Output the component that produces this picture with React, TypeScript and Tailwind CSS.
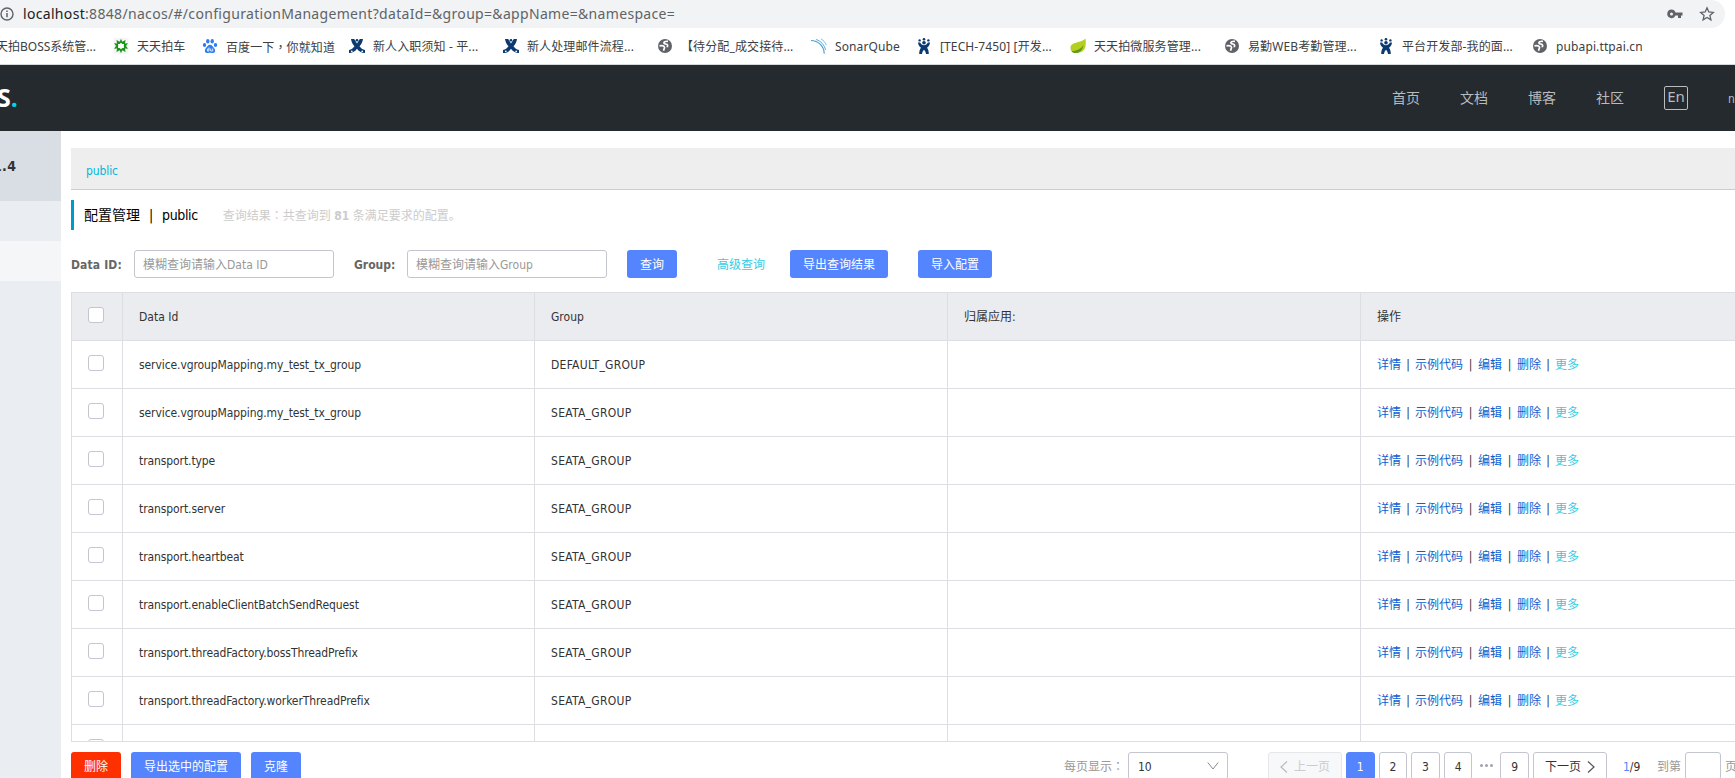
import type { ReactNode } from "react";

const globe = (
	<svg viewBox="0 0 16 16" className="w-4 h-4">
		<circle cx="8" cy="8" r="7" fill="#5f6368" />
		<path
			d="M2.500 7.800c2.200-.3 4.500-.2 5 1.200.5 1.300-1 1.500-.8 3.800M11 3.300C8 3 6.500 3.900 7 5.200c.7 1.200 3 .4 3.500 1.800.3.900-.2 1.600-.2 2.300"
			stroke="#fff"
			strokeWidth="1.700"
			fill="none"
		/>
	</svg>
);

const jira = (
	<svg viewBox="0 0 16 16" className="w-4 h-4" fill="#0b3a70">
		<circle cx="3.600" cy="2.400" r="1.200" />
		<circle cx="8" cy="1.300" r="1.300" />
		<circle cx="12.400" cy="2.400" r="1.200" />
		<circle cx="8" cy="4.800" r="1.800" />
		<path d="M2 4.500h2.200C5 6.300 6.300 7.300 8 7.300s3-1 3.800-2.800H14c-.2 2.400-1.300 4-3 5.300 1.300 1.700 1.800 3.800 1.800 6.200H10c-.1-1.500-.8-3-2-4.300-1.200 1.300-1.900 2.800-2 4.300H3.200c0-2.400.5-4.500 1.800-6.200-1.700-1.300-2.800-2.900-3-5.300z" />
	</svg>
);

const confluence = (
	<svg viewBox="0 0 16 16" className="w-4 h-4" fill="#0b3a70">
		<circle cx="8" cy="2.300" r="1.300" />
		<path d="M2 1h3.200L8 5.500 10.800 1H14c-.4 3-1.600 5.300-3.500 7.300 1.400 2 3 3.100 5.500 3.700v3c-3.700 0-6.300-1.500-8-4.200C6.300 13.500 3.700 15 0 15v-3c2.500-.6 4.100-1.700 5.500-3.700C3.600 6.300 2.400 4 2 1z" />
		<circle cx="2.800" cy="13.300" r=".9" fill="#fff" />
		<circle cx="13.200" cy="13.300" r=".9" fill="#fff" />
	</svg>
);

const burst = (
	<svg viewBox="0 0 16 16" className="w-4 h-4">
		<rect x=".5" y="0" width="15" height="16" fill="#f5f5f5" />
		<path
			d="M8 .8l1.300 3L12.500 2l-.5 3.400 3-.2L13 8l2 2.700-3-.2.5 3.500-3.200-1.800L8 15.200l-1.300-3L3.500 14l.5-3.500-3 .2L3 8 1 5.200l3 .2L3.500 2l3.200 1.800z"
			fill="#1c941c"
		/>
		<path d="M8 4.800l1.300 1.300L11 6l-.2 2 .2 2-1.700-.1L8 11.200 6.700 9.900 5 10l.2-2L5 6l1.700.1z" fill="#fff" />
	</svg>
);

const paw = (
	<svg viewBox="0 0 16 16" className="w-4 h-4" fill="#2d7ff0">
		<ellipse cx="2.500" cy="7" rx="1.700" ry="2.100" />
		<ellipse cx="5.800" cy="3.200" rx="1.700" ry="2.300" />
		<ellipse cx="10.200" cy="3.200" rx="1.700" ry="2.300" />
		<ellipse cx="13.500" cy="7" rx="1.700" ry="2.100" />
		<path d="M8 6.800c2 0 2.500 1.800 4 3.200 1.700 1.500 1.700 5-1 5-1.200 0-1.800-.3-3-.3s-1.800.3-3 .3c-2.700 0-2.700-3.500-1-5 1.500-1.400 2-3.200 4-3.200z" />
		<path
			d="M7 9.500V13H5.500v-2H7M8.700 10.500V13h2v-2.500"
			stroke="#fff"
			strokeWidth=".8"
			fill="none"
		/>
	</svg>
);

const sonar = (
	<svg viewBox="0 0 16 16" className="w-4 h-4" fill="none" stroke="#4b9fd5">
		<path d="M0 2.500C7 2.500 13 8 13.200 15.500" strokeWidth="1.200" />
		<path d="M5 1.500c5 1.500 8.500 5.500 9.500 10.500" strokeWidth=".9" />
		<path d="M10 1c2.500 1.300 4.200 3.400 5.300 6" strokeWidth=".7" />
	</svg>
);

const leaf = (
	<svg viewBox="0 0 16 16" className="w-4 h-4">
		<path
			d="M15.500.5c.8 7 .3 14-8.500 14.300C3 15 .5 13.500.5 10 .5 3.500 11.500 5 15.500.5z"
			fill="#b5cf1f"
		/>
		<path
			d="M1.500 13c5 .3 9.500-2.200 12-6-1 5.500-4 8.300-8.500 8-1.700-.1-3-.8-3.500-2z"
			fill="#5f9a1c"
		/>
	</svg>
);

type Bookmark = { icon: ReactNode; label: ReactNode; width: string };

// Full-width punctuation centred in its cell
function Punct({ children }: { children: ReactNode }) {
	return <span className="font-['Noto_Sans_CJK_TC',sans-serif]">{children}</span>;
}

const bookmarks: Bookmark[] = [
	{ icon: burst, label: "天天拍车", width: "w-[89px]" },
	{ icon: paw, label: <>百度一下<Punct>，</Punct>你就知道</>, width: "w-[147px]" },
	{ icon: confluence, label: "新人入职须知 - 平...", width: "w-[154px]" },
	{ icon: confluence, label: "新人处理邮件流程...", width: "w-[154px]" },
	{ icon: globe, label: "【待分配_成交接待...", width: "w-[154px]" },
	{ icon: sonar, label: "SonarQube", width: "w-[105px]" },
	{ icon: jira, label: "[TECH-7450] [开发...", width: "w-[154px]" },
	{ icon: leaf, label: "天天拍微服务管理...", width: "w-[154px]" },
	{ icon: globe, label: "易勤WEB考勤管理...", width: "w-[154px]" },
	{ icon: jira, label: "平台开发部-我的面...", width: "w-[154px]" },
	{ icon: globe, label: "pubapi.ttpai.cn", width: "w-[154px]" },
];

const rows = [
	["service.vgroupMapping.my_test_tx_group", "DEFAULT_GROUP"],
	["service.vgroupMapping.my_test_tx_group", "SEATA_GROUP"],
	["transport.type", "SEATA_GROUP"],
	["transport.server", "SEATA_GROUP"],
	["transport.heartbeat", "SEATA_GROUP"],
	["transport.enableClientBatchSendRequest", "SEATA_GROUP"],
	["transport.threadFactory.bossThreadPrefix", "SEATA_GROUP"],
	["transport.threadFactory.workerThreadPrefix", "SEATA_GROUP"],
	["", ""],
];

const gridCols = "grid grid-cols-[51px_412px_413px_413px_413px]";

function Checkbox() {
	return (
		<span className="block w-4 h-4 ml-4 mt-3.5 rounded-[3px] border border-[#c4c6cf] bg-white" />
	);
}

function BrowserBar() {
	return (
		<div className="h-[65px] bg-white border-b border-[#d6d8da] font-['Noto_Sans','Noto_Sans_CJK_SC',sans-serif]">
			<div className="flex items-center h-7 w-[1725px] rounded-r-[14px] bg-[#f1f3f4] text-sm text-[#5f6368]">
				<svg viewBox="0 0 14 14" className="w-3.5 h-3.5 shrink-0">
					<circle cx="7" cy="7" r="6" fill="none" stroke="#5f6368" strokeWidth="1.400" />
					<path d="M7 6v4.300M7 3.500v1.500" stroke="#5f6368" strokeWidth="1.500" />
				</svg>
				<span className="ml-[9px] grow tracking-[0.32px] whitespace-nowrap">
					<span className="text-[#202124]">localhost</span>
					:8848/nacos/#/configurationManagement?dataId=&amp;group=&amp;appName=&amp;namespace=
				</span>
				<svg viewBox="0 0 16 10" className="w-4 h-2.5 mr-4" fill="#5f6368">
					<path
						fillRule="evenodd"
						d="M4.500.5A4.200 4.200 0 0 1 8.500 3.500H15.500V6.500H14V9H11V6.500H8.500A4.300 4.300 0 1 1 4.500.5zM4.500 3.500a1.500 1.500 0 1 0 0 3 1.500 1.500 0 0 0 0-3z"
					/>
				</svg>
				<svg viewBox="0 0 16 16" className="w-4 h-4 mr-2.5" fill="none" stroke="#5f6368" strokeWidth="1.300">
					<path d="M8 1.800l1.800 4.200 4.500.4-3.400 3 1 4.400L8 11.500l-3.900 2.300 1-4.400-3.400-3 4.500-.4z" />
				</svg>
			</div>
			<div className="flex items-center h-9 text-xs text-[#3c4043] whitespace-nowrap">
				<span className="w-[117px] shrink-0 -ml-1 pt-0.5">天拍BOSS系统管...</span>
				{bookmarks.map((b, i) => (
					<div key={i} className={`flex items-center gap-2 shrink-0 ${b.width}`}>
						{b.icon}
						<span className="pt-0.5 tracking-[0.12px]">{b.label}</span>
					</div>
				))}
			</div>
		</div>
	);
}

function Header() {
	return (
		<header className="flex items-center justify-between h-[66px] bg-[#252a2f] text-sm text-[#b9bbbd]">
			<span className="-ml-[3px] font-['Open_Sans'] text-[25px] font-bold leading-none text-white">
				S<span className="text-[#00d5f0]">.</span>
			</span>
			<nav className="flex items-center gap-10 w-[343px] shrink-0 whitespace-nowrap">
				<span>首页</span>
				<span>文档</span>
				<span>博客</span>
				<span>社区</span>
				<span className="flex items-center justify-center w-6 h-6 shrink-0 rounded-xs border border-[#b9bbbd] font-['Noto_Sans'] text-[15px] pb-0.5">
					En
				</span>
				<span className="text-xs pt-0.5">nacos</span>
			</nav>
		</header>
	);
}

function Sidebar() {
	return (
		<aside className="w-[61px] shrink-0 bg-[#eaedf1]">
			<div className="flex h-[70px] items-center bg-[#d9dde4]">
				<span className="-ml-[7px] text-sm font-bold tracking-[0.3px] text-[#333]">1.4</span>
			</div>
			<div className="h-10" />
			<div className="h-10 bg-[#f5f6f8]" />
		</aside>
	);
}

function SearchBar() {
	return (
		<div className="flex items-center mt-5 h-7 whitespace-nowrap">
			<span className="w-[63px] pt-0.5 font-bold tracking-[0.15px] text-[#666]">Data ID:</span>
			<div className="flex items-center w-[200px] h-7 px-2 pt-0.5 rounded-[3px] border border-[#c4c6cf] text-[#999]">
				模糊查询请输入Data ID
			</div>
			<span className="w-[53px] ml-5 pt-0.5 font-bold text-[#666]">Group:</span>
			<div className="flex items-center w-[200px] h-7 px-2 pt-0.5 rounded-[3px] border border-[#c4c6cf] text-[#999]">
				模糊查询请输入Group
			</div>
			<button className="w-[50px] h-7 ml-5 pt-0.5 rounded-[3px] bg-[#5584ff] text-white">查询</button>
			<span className="w-[73px] ml-10 pt-0.5 text-[#33cde5]">高级查询</span>
			<button className="w-[98px] h-7 pt-0.5 rounded-[3px] bg-[#5584ff] text-white">导出查询结果</button>
			<button className="w-[74px] h-7 ml-[30px] pt-0.5 rounded-[3px] bg-[#5584ff] text-white">导入配置</button>
		</div>
	);
}

function ConfigTable() {
	return (
		<div className="mt-3.5 h-[450px] w-[1702px] overflow-hidden border border-[#dcdee3] text-[#333]">
			<div className={`${gridCols} h-12 bg-[#ebecf0] border-b border-[#dcdee3] leading-[49px] [&>div]:h-[47px] [&>div]:border-r [&>div]:border-[#dcdee3]`}>
				<div><Checkbox /></div>
				<div className="pl-4">Data Id</div>
				<div className="pl-4">Group</div>
				<div className="pl-4">归属应用:</div>
				<div className="pl-4">操作</div>
			</div>
			{rows.map(([dataId, group], i) => (
				<div
					key={i}
					className={`${gridCols} h-12 border-b border-[#dcdee3] leading-[49px] [&>div]:h-[47px] [&>div]:border-r [&>div]:border-[#dcdee3]`}
				>
					<div><Checkbox /></div>
					<div className="pl-4 tracking-[-0.09px]">{dataId}</div>
					<div className="pl-4 tracking-[0.28px]">{group}</div>
					<div />
					<div className="flex pl-4 text-[#0f5fd0]">
						{dataId && (
							<>
								<span>详情</span>
								<span className="w-3.5 text-center text-[#333]">|</span>
								<span>示例代码</span>
								<span className="w-[15px] text-center text-[#333]">|</span>
								<span>编辑</span>
								<span className="w-[15px] text-center text-[#333]">|</span>
								<span>删除</span>
								<span className="w-3.5 text-center text-[#333]">|</span>
								<span className="text-[#33cde5]">更多</span>
							</>
						)}
					</div>
				</div>
			))}
		</div>
	);
}

function Page({ n, active }: { n: number; active?: boolean }) {
	return (
		<span
			className={`flex items-center justify-center w-[28.6px] h-7 pt-0.5 shrink-0 rounded-[3px] border ${
				active ? "bg-[#5584ff] border-[#5584ff] text-white" : "border-[#c4c6cf] text-[#333]"
			}`}
		>
			{n}
		</span>
	);
}

function Footer() {
	return (
		<div className="flex items-center mt-2.5 h-7 w-[1690px] shrink-0 whitespace-nowrap">
			<button className="w-[50px] h-7 pt-0.5 rounded-[3px] bg-[#ff3000] text-white">删除</button>
			<button className="w-[110px] h-7 ml-2.5 pt-0.5 rounded-[3px] bg-[#5584ff] text-white">导出选中的配置</button>
			<button className="w-[50px] h-7 ml-2.5 pt-0.5 rounded-[3px] bg-[#5584ff] text-white">克隆</button>
			<span className="w-16 ml-[763px] pt-0.5 text-[#999]">每页显示<Punct>：</Punct></span>
			<div className="flex items-center justify-between w-[100px] h-7 pl-[9px] pr-2 rounded-[3px] border border-[#c4c6cf] text-[#333]">
				<span className="pt-0.5">10</span>
				<svg viewBox="0 0 12 8" className="w-3 h-2" fill="none" stroke="#888">
					<path d="M.8.500L6 7 11.200.500" />
				</svg>
			</div>
			<div className="flex items-center gap-1 ml-10">
				<span className="flex items-center justify-center gap-1.5 w-[74px] h-7 pt-0.5 rounded-[3px] border border-[#e6e7eb] bg-[#f7f8fa] text-[#ccc]">
					<svg viewBox="0 0 8 12" className="w-2 h-3" fill="none" stroke="#bbb" strokeWidth="1.200">
						<path d="M7 .5L1 6l6 5.500" />
					</svg>
					上一页
				</span>
				<Page n={1} active />
				<Page n={2} />
				<Page n={3} />
				<Page n={4} />
				<span className="flex justify-center gap-0.5 w-5">
					<i className="w-[3px] h-[3px] rounded-full bg-[#a0a2ad]" />
					<i className="w-[3px] h-[3px] rounded-full bg-[#a0a2ad]" />
					<i className="w-[3px] h-[3px] rounded-full bg-[#a0a2ad]" />
				</span>
				<Page n={9} />
				<span className="flex items-center justify-center gap-1.5 w-[74px] h-7 pt-0.5 rounded-[3px] border border-[#c4c6cf] text-[#333]">
					下一页
					<svg viewBox="0 0 8 12" className="w-2 h-3" fill="none" stroke="#555" strokeWidth="1.200">
						<path d="M1 .5L7 6l-6 5.500" />
					</svg>
				</span>
			</div>
			<span className="w-[34px] ml-4 pt-0.5 text-[#333]">
				<span className="text-[#5584ff]">1</span>/9
			</span>
			<span className="w-7 pt-0.5 text-[#999]">到第</span>
			<span className="w-9 h-7 mr-1 rounded-[3px] border border-[#c4c6cf]" />
			<span className="pt-0.5 text-[#999]">页</span>
		</div>
	);
}

export default function App() {
	return (
		<div className="flex flex-col h-screen w-full overflow-hidden bg-white text-xs font-['DejaVu_Sans_Condensed','Noto_Sans_CJK_SC',sans-serif]">
			<BrowserBar />
			<Header />
			<div className="flex grow min-h-0">
				<Sidebar />
				<main className="grow min-w-0 overflow-hidden pl-2.5 pt-[17px]">
					<div className="flex items-center h-[42px] pl-[15px] bg-[#eee] border-b border-[#ccc] pt-1.5 tracking-[-0.1px] text-[#00b7dd]">
						public
					</div>
					{/* Page title */}
					<div className="flex items-center mt-2.5 h-[30px] pl-2.5 border-l-3 border-[#09c] text-sm text-black">
						<span>配置管理</span>
						<span className="w-[22px] text-center">|</span>
						<span className="tracking-[-0.35px]">public</span>
						<span className="ml-[25px] pt-0.5 text-xs text-[#ccc]">
							查询结果<Punct>：</Punct>共查询到 <b>81</b> 条满足要求的配置。
						</span>
					</div>
					<SearchBar />
					<ConfigTable />
					<Footer />
				</main>
			</div>
		</div>
	);
}
